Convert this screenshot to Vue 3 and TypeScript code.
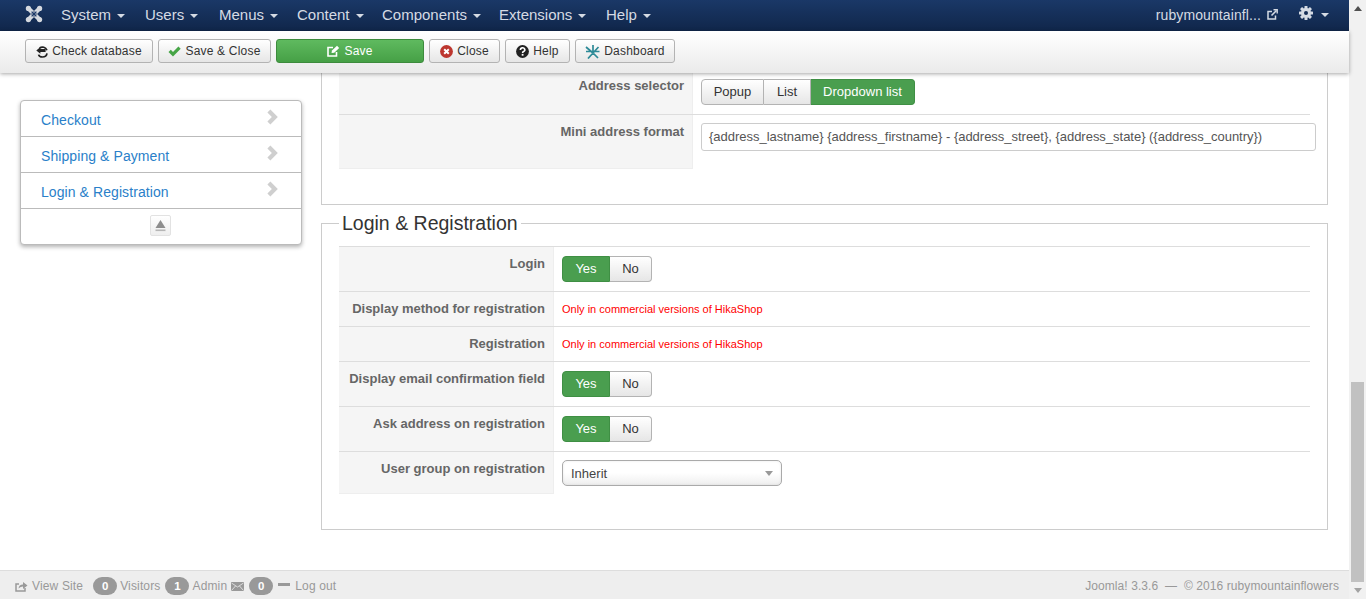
<script setup lang="ts">
interface Row { label: string; kind: 'toggle' | 'note' | 'select' }
interface Menu { name: string; width: number }
const menus: Menu[] = [
  { name: 'System', width: 84 },
  { name: 'Users', width: 74 },
  { name: 'Menus', width: 78 },
  { name: 'Content', width: 85 },
  { name: 'Components', width: 117 },
  { name: 'Extensions', width: 107 },
  { name: 'Help', width: 60 },
]
const sideLinks: string[] = ['Checkout', 'Shipping & Payment', 'Login & Registration']
const rows: Row[] = [
  { label: 'Login', kind: 'toggle' },
  { label: 'Display method for registration', kind: 'note' },
  { label: 'Registration', kind: 'note' },
  { label: 'Display email confirmation field', kind: 'toggle' },
  { label: 'Ask address on registration', kind: 'toggle' },
  { label: 'User group on registration', kind: 'select' },
]
</script>

<template>
  <div class="screen">
    <div class="page">
      <header class="navbar">
        <svg class="logo" width="18" height="18" viewBox="0 0 18 18" fill="none">
          <g stroke="#d5d9df">
            <path d="M3.5 3.5 L7.5 7.5 M14.5 3.5 L10.5 7.5 M3.5 14.5 L7.5 10.5 M14.5 14.5 L10.5 10.5" stroke-width="4.4" />
            <circle cx="3.4" cy="3.4" r="2.6" fill="#d5d9df" stroke="none" />
            <circle cx="14.6" cy="3.4" r="2.6" fill="#d5d9df" stroke="none" />
            <circle cx="3.4" cy="14.6" r="2.6" fill="#d5d9df" stroke="none" />
            <circle cx="14.6" cy="14.6" r="2.6" fill="#d5d9df" stroke="none" />
          </g>
          <path d="M9 5.6 L12.4 9 L9 12.4 L5.6 9 Z" fill="#8b97aa" />
          <path d="M6.6 6.6 L11.4 11.4 M11.4 6.6 L6.6 11.4" stroke="#1a3867" stroke-width="1.2" />
        </svg>
        <nav class="menus">
          <span v-for="m in menus" :key="m.name" class="menu" :style="{ width: m.width + 'px' }">{{ m.name }}<i class="caret"></i></span>
        </nav>
        <div class="nav-right">
          <span class="site">rubymountainfl...</span>
          <svg class="ext" width="11" height="11" viewBox="0 0 11 11" fill="none" stroke="#d5dbe4">
            <path d="M8.5 6.5 V10 H1 V2.5 H5" stroke-width="1.5" />
            <path d="M4.5 6.5 L9.5 1.5" stroke-width="1.6" />
            <path d="M6.5 0.8 H10.2 V4.5" stroke-width="1.4" />
          </svg>
          <svg class="gear" width="14" height="14" viewBox="0 0 14 14">
            <g fill="#d5dbe4">
              <rect x="5.5" y="0" width="3" height="14" rx=".5" />
              <rect x="5.5" y="0" width="3" height="14" rx=".5" transform="rotate(45 7 7)" />
              <rect x="5.5" y="0" width="3" height="14" rx=".5" transform="rotate(90 7 7)" />
              <rect x="5.5" y="0" width="3" height="14" rx=".5" transform="rotate(135 7 7)" />
              <circle cx="7" cy="7" r="5" />
            </g>
            <circle cx="7" cy="7" r="2" fill="#142c54" />
          </svg>
          <i class="caret gear-caret"></i>
        </div>
      </header>

      <div class="toolbar">
        <button class="btn w-check">
          <svg width="12" height="13" viewBox="0 0 12 13" fill="none" stroke="#222">
            <path d="M3.6 3 A5 5 0 0 1 11 5.2" stroke-width="1.6" />
            <path d="M0.3 5.4 L4.4 2 V4 H9.6 V7 H4.4 V8.8 Z" fill="#222" stroke="none" />
            <path d="M2.6 9.6 Q3 12 6.5 12 Q10.4 12 11 8.4" stroke-width="1.7" />
          </svg>
          Check database
        </button>
        <button class="btn w-saveclose">
          <svg width="13" height="11" viewBox="0 0 13 11"><path d="M0.5 6 L2.8 3.8 L5 6 L10.4 0.5 L12.7 2.8 L5 10.5 Z" fill="#46a546" /></svg>
          Save &amp; Close
        </button>
        <button class="btn btn-green w-save">
          <svg width="13" height="12" viewBox="0 0 13 12" fill="none" stroke="#fff">
            <path d="M9.5 7 V11 H1 V2.5 H6" stroke-width="1.6" />
            <path d="M4.5 8 L5 5.5 L10 0.8 L12.2 3 L7.2 7.7 Z" fill="#fff" stroke="none" />
          </svg>
          Save
        </button>
        <button class="btn w-close">
          <svg width="13" height="13" viewBox="0 0 13 13">
            <circle cx="6.5" cy="6.5" r="6.4" fill="#bd362f" />
            <path d="M4.2 4.2 L8.8 8.8 M8.8 4.2 L4.2 8.8" stroke="#fff" stroke-width="2" />
          </svg>
          Close
        </button>
        <button class="btn w-help">
          <svg width="13" height="13" viewBox="0 0 13 13">
            <circle cx="6.5" cy="6.5" r="6.4" fill="#222" />
            <path d="M4.4 5 A2.2 2 0 1 1 7.6 6.6 Q6.6 7 6.6 8" fill="none" stroke="#fff" stroke-width="1.6" />
            <rect x="5.7" y="8.9" width="1.8" height="1.8" fill="#fff" />
          </svg>
          Help
        </button>
        <button class="btn w-dash">
          <svg width="15" height="15" viewBox="0 0 15 15" fill="none" stroke="#2d8a97" stroke-width="1.7">
            <path d="M8 1 V9 M8 9 L13.5 3 M8 9 L1 3 M8 9 L3 14.5 M8 9 L13 14 M1 7.5 H14.5" />
          </svg>
          Dashboard
        </button>
      </div>

      <div class="body">
        <aside class="sidebar">
          <a v-for="s in sideLinks" :key="s" class="side-link">
            <span>{{ s }}</span>
            <svg width="11" height="16" viewBox="0 0 11 16"><path d="M3.4 0.5 L10.8 8 L3.4 15.5 L0.4 12.5 L4.9 8 L0.4 3.5 Z" fill="#cfcfcf" /></svg>
          </a>
          <div class="side-foot">
            <span class="eject">
              <svg width="11" height="12" viewBox="0 0 11 12"><path d="M5.5 0 L10.5 8 H0.5 Z" fill="#8e8e8e" /><rect x="0.5" y="9.5" width="10" height="1.6" fill="#b5b5b5" /></svg>
            </span>
          </div>
        </aside>

        <main class="content">
          <section class="panel panel-top">
            <div class="row row-cut">
              <div class="key key-wide">Address selector</div>
              <div class="val">
                <div class="group">
                  <span class="seg seg-popup">Popup</span>
                  <span class="seg seg-list">List</span>
                  <span class="seg seg-on seg-drop">Dropdown list</span>
                </div>
              </div>
            </div>
            <div class="row row-mini">
              <div class="key key-wide">Mini address format</div>
              <div class="val">
                <div class="input">{address_lastname} {address_firstname} - {address_street}, {address_state} ({address_country})</div>
              </div>
            </div>
          </section>

          <fieldset class="panel panel-login">
            <legend>Login &amp; Registration</legend>
            <div v-for="r in rows" :key="r.label" class="row" :class="'row-' + r.kind">
              <div class="key">{{ r.label }}</div>
              <div class="val">
                <div v-if="r.kind === 'toggle'" class="group">
                  <span class="seg seg-on seg-yes">Yes</span>
                  <span class="seg seg-no">No</span>
                </div>
                <span v-else-if="r.kind === 'note'" class="note">Only in commercial versions of HikaShop</span>
                <div v-else class="select">Inherit<i class="sel-arrow"></i></div>
              </div>
            </div>
          </fieldset>
        </main>
      </div>

      <footer class="footer">
        <div class="foot-left">
          <svg class="f-out" width="13" height="11" viewBox="0 0 13 11" fill="none" stroke="#999">
            <path d="M10 7 V10 H1 V3 H4" stroke-width="1.5" />
            <path d="M3.5 7.5 Q4 3.5 8 3.5 V1 L12.5 4.5 L8 8 V5.5 Q5.5 5.5 3.5 7.5 Z" fill="#999" stroke="none" />
          </svg>
          <span class="f-view">View Site</span>
          <span class="badge">0</span><span class="f-t">Visitors</span>
          <span class="badge">1</span><span class="f-t">Admin</span>
          <svg class="f-mail" width="13" height="9" viewBox="0 0 13 9">
            <rect width="13" height="9" fill="#999" />
            <path d="M0.5 1 L6.5 5 L12.5 1 M0.5 8.5 L4.5 4 M12.5 8.5 L8.5 4" stroke="#eee" stroke-width=".8" fill="none" />
          </svg>
          <span class="badge">0</span>
          <span class="f-dash"></span>
          <span class="f-t">Log out</span>
        </div>
        <div class="foot-right">Joomla! 3.3.6 &nbsp;— &nbsp;© 2016 rubymountainflowers</div>
      </footer>
    </div>

    <div class="scrollbar">
      <div class="sb-btn"><i class="sb-up"></i></div>
      <div class="sb-track"><div class="sb-thumb"></div></div>
      <div class="sb-btn"><i class="sb-down"></i></div>
    </div>
  </div>
</template>

<style>
html, body { margin: 0; height: 100%; overflow: hidden; background: #fff; }
</style>

<style scoped>
.screen {
  display: flex;
  width: 1366px;
  height: 599px;
  overflow: hidden;
  font-family: "Liberation Sans", Arial, sans-serif;
  font-size: 13px;
  color: #555;
}
.page { width: 1349px; height: 599px; display: flex; flex-direction: column; }

/* navbar */
.navbar {
  height: 31px;
  flex: none;
  box-sizing: border-box;
  display: flex;
  align-items: center;
  padding: 0 0 2px 25px;
  background: linear-gradient(#1a3867, #10264a);
  color: #d5dbe4;
  font-size: 15px;
}
.logo { flex: none; margin-top: -2px; }
.menus { display: flex; margin-left: 18px; }
.menu { display: flex; align-items: center; white-space: nowrap; }
.caret {
  display: inline-block;
  width: 0; height: 0;
  margin-left: 6px;
  margin-top: 2px;
  border-left: 4px solid transparent;
  border-right: 4px solid transparent;
  border-top: 4px solid #d5dbe4;
}
.nav-right { margin-left: auto; display: flex; align-items: center; padding-right: 20px; font-size: 14px; letter-spacing: .1px; }
.site { margin-right: 6px; }
.ext { margin-right: 21px; }
.gear { margin-top: -3px; }
.gear-caret { margin-left: 8px; margin-top: 0; }

/* toolbar */
.toolbar {
  height: 42px;
  flex: none;
  box-sizing: border-box;
  padding: 8px 0 0 25px;
  display: flex;
  gap: 5px;
  align-items: flex-start;
  background: linear-gradient(#fff, #eaeaea);
  box-shadow: 0 1px 4px rgba(0, 0, 0, .35);
  position: relative;
  z-index: 2;
}
.btn {
  height: 24px;
  box-sizing: border-box;
  display: flex;
  align-items: center;
  justify-content: center;
  gap: 4px;
  padding: 0;
  border: 1px solid #b3b3b3;
  border-radius: 3px;
  background: linear-gradient(#fff, #e6e6e6);
  color: #333;
  font: 12px "Liberation Sans", Arial, sans-serif;
  letter-spacing: .2px;
}
.btn-green {
  background: linear-gradient(#5fba5f, #46a046);
  border-color: #3d8b3d;
  color: #fff;
}
.w-check { width: 128px; }
.w-saveclose { width: 113px; }
.w-save { width: 148px; }
.w-close { width: 71px; }
.w-help { width: 65px; }
.w-dash { width: 100px; }

/* body */
.body { flex: 1; min-height: 0; display: flex; }
.sidebar {
  flex: none;
  width: 282px;
  height: 145px;
  box-sizing: border-box;
  margin: 27px 0 0 20px;
  border: 1px solid #bbb;
  border-radius: 4px;
  box-shadow: 0 2px 4px rgba(0, 0, 0, .3);
  background: #fff;
}
.side-link {
  height: 36px;
  box-sizing: border-box;
  display: flex;
  align-items: center;
  justify-content: space-between;
  padding: 2px 23px 0 20px;
  border-bottom: 1px solid #bbb;
  color: #2a7fc9;
  font-size: 14px;
  letter-spacing: .08px;
}
.side-link svg { margin-top: -5px; }
.side-foot { display: flex; justify-content: center; padding: 6px 2px 0 0; }
.eject {
  width: 21px;
  height: 21px;
  box-sizing: border-box;
  border: 1px solid #e2e2e2;
  border-radius: 2px;
  display: flex;
  align-items: center;
  justify-content: center;
  background: linear-gradient(#fff, #eee);
}
.content { margin-left: 19px; width: 1007px; flex: none; }
.panel {
  box-sizing: border-box;
  width: 1007px;
  margin: 0;
  border: 1px solid #ccc;
  padding: 0 17px;
}
.panel-top { border-top: none; height: 132px; }
.panel-login { margin-top: 7px; min-width: 0; padding-top: 12px; height: 318px; }
legend {
  padding: 0 3px;
  font-size: 19.5px;
  line-height: 22px;
  color: #333;
}
.row { display: flex; box-sizing: border-box; border-top: 1px solid #ddd; }
.row-cut { border-top: none; height: 41px; }
.row-mini { height: 55px; }
.row-toggle { height: 45px; }
.row-note { height: 35px; }
.row-select { height: 43px; }
.key {
  flex: none;
  width: 215px;
  box-sizing: border-box;
  padding: 8px 8px 0 0;
  background: #f5f5f5;
  border-right: 1px solid #eee;
  text-align: right;
  font-weight: 700;
  font-size: 13px;
  line-height: 18px;
  color: #666;
  white-space: nowrap;
}
.row-cut .key { padding-top: 4px; }
.key-wide { width: 354px; }
.row-mini .key, .row-select .key { border-bottom: 1px solid #eee; }
.val { flex: 1; min-width: 0; padding: 9px 0 0 8px; }
.row-cut .val { padding-top: 6px; }
.row-mini .val { padding-top: 8px; }
.row-note .val { padding-top: 8px; line-height: 18px; }
.group { display: flex; height: 26px; }
.seg {
  box-sizing: border-box;
  height: 26px;
  padding-bottom: 2px;
  display: flex;
  align-items: center;
  justify-content: center;
  border: 1px solid #b3b3b3;
  border-left-width: 0;
  background: linear-gradient(#fff, #e6e6e6);
  color: #333;
  font-size: 13px;
}
.seg:first-child { border-left-width: 1px; border-radius: 4px 0 0 4px; }
.seg:last-child { border-radius: 0 4px 4px 0; }
.seg-on { background: #4a9e4f; border-color: #3f8f44; color: #fff; }
.seg-popup { width: 63px; }
.seg-list { width: 47px; }
.seg-drop { width: 104px; }
.seg-yes { width: 48px; }
.seg-no { width: 42px; }
.input {
  box-sizing: border-box;
  width: 615px;
  height: 28px;
  padding: 0 7px 1px;
  display: flex;
  align-items: center;
  border: 1px solid #ccc;
  border-radius: 3px;
  background: #fff;
  white-space: nowrap;
  color: #555;
  font-size: 13px;
  letter-spacing: -.02px;
}
.note { color: #f00; font-size: 11px; }
.select {
  box-sizing: border-box;
  width: 220px;
  height: 26px;
  margin-top: -1px;
  padding: 0 8px;
  display: flex;
  align-items: center;
  justify-content: space-between;
  border: 1px solid #aaa;
  border-radius: 5px;
  background: linear-gradient(#fff 50%, #eee);
  box-shadow: 0 0 3px rgba(0,0,0,.08) inset;
  color: #444;
  font-size: 13px;
}
.sel-arrow {
  width: 0; height: 0;
  border-left: 4px solid transparent;
  border-right: 4px solid transparent;
  border-top: 5px solid #999;
}

/* footer */
.footer {
  height: 29px;
  flex: none;
  box-sizing: border-box;
  display: flex;
  align-items: center;
  justify-content: space-between;
  padding: 2px 10px 0 15px;
  border-top: 1px solid #ddd;
  background: #eee;
  color: #999;
  font-size: 12px;
  letter-spacing: .15px;
}
.foot-right { letter-spacing: .08px; }
.foot-left { display: flex; align-items: center; }
.f-out { margin-right: 4px; }
.f-view { margin-right: 10px; }
.badge {
  box-sizing: border-box;
  width: 24px;
  height: 18px;
  border-radius: 9px;
  background: #999;
  color: #fff;
  font-weight: 700;
  font-size: 11.5px;
  display: flex;
  align-items: center;
  justify-content: center;
}
.f-t { margin: 0 5px 0 3px; }
.f-mail { margin: 0 5px 0 -1px; }
.f-dash { width: 12px; height: 3px; background: #999; margin: 0 2px 3px 5px; }

/* scrollbar */
.scrollbar { width: 17px; flex: none; height: 599px; display: flex; flex-direction: column; background: #f1f1f1; }
.sb-btn { height: 17px; flex: none; display: flex; align-items: center; justify-content: center; }
.sb-up { border-left: 4px solid transparent; border-right: 4px solid transparent; border-bottom: 5px solid #505050; }
.sb-down { border-left: 4px solid transparent; border-right: 4px solid transparent; border-top: 5px solid #a3a3a3; }
.sb-track { flex: 1; display: flex; flex-direction: column; justify-content: flex-end; }
.sb-thumb { height: 200px; margin: 0 2px; background: #c1c1c1; }
</style>
